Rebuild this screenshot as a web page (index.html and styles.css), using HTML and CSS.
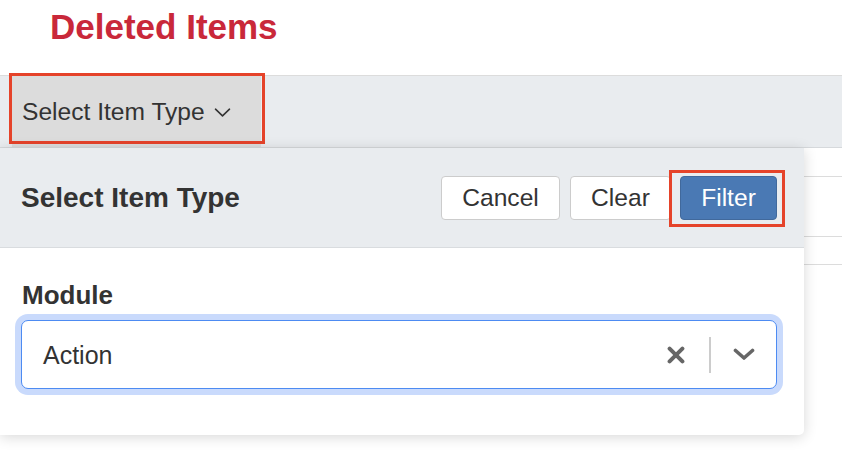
FILE: index.html
```html
<!DOCTYPE html>
<html lang="en">
<head>
<meta charset="utf-8">
<title>Deleted Items</title>
<link rel="stylesheet" href="styles.css">
</head>
<body>
  <div class="page">
    <header class="page-header">
      <h1 class="page-title">Deleted Items</h1>
    </header>

    <div class="filter-wrap">
      <div class="toolbar">
        <button class="type-toggle annotated-bar" type="button">
          <span>Select Item Type</span>
          <svg class="toggle-chevron" width="17" height="9" viewBox="0 0 17 9" aria-hidden="true">
            <polyline points="1.5,1.2 8.5,7.8 15.5,1.2" fill="none" stroke="#333" stroke-width="1.6" stroke-linecap="round" stroke-linejoin="round"/>
          </svg>
        </button>
      </div>

      <div class="popover">
        <div class="popover-header">
          <h2 class="popover-title">Select Item Type</h2>
          <div class="actions">
            <button class="btn btn-default" type="button">Cancel</button>
            <button class="btn btn-default btn-clear" type="button">Clear</button>
            <button class="btn btn-primary annotated-btn" type="button">Filter</button>
          </div>
        </div>
        <div class="popover-body">
          <label class="field-label">Module</label>
          <div class="select-box">
            <span class="select-value">Action</span>
            <svg class="clear-icon" width="18" height="18" viewBox="0 0 18 18" aria-hidden="true">
              <path d="M2.6 2.6 L15.4 15.4 M15.4 2.6 L2.6 15.4" fill="none" stroke="#666" stroke-width="4" stroke-linecap="round"/>
            </svg>
            <span class="select-sep"></span>
            <svg class="select-chevron" width="22" height="13" viewBox="0 0 22 13" aria-hidden="true">
              <polyline points="2.5,2.5 11,10 19.5,2.5" fill="none" stroke="#666" stroke-width="3.6" stroke-linecap="round" stroke-linejoin="round"/>
            </svg>
          </div>
        </div>
      </div>
    </div>

    <table class="list">
      <tr class="row-head"><td></td></tr>
      <tr class="row-main"><td></td></tr>
      <tr class="row-sub"><td></td></tr>
    </table>
  </div>
</body>
</html>
```

FILE: styles.css
```css
* {
  box-sizing: border-box;
}

html,
body {
  height: 100%;
}

body {
  margin: 0;
  background: #ffffff;
  color: #333333;
  font-family: "Liberation Sans", Arial, Helvetica, sans-serif;
}

.page {
  min-height: 468px;
  overflow: hidden;
}

.page-header {
  height: 75px;
  padding: 7px 0 0 50px;
}

.page-title {
  margin: 0;
  font-size: 35px;
  line-height: 40px;
  font-weight: 700;
  color: #c9283a;
}

.filter-wrap {
  position: relative;
}

.toolbar {
  height: 73px;
  background: #e9ecef;
  border-top: 1px solid #dcdcdc;
  border-bottom: 1px solid #d6d9dc;
  padding-left: 12px;
  display: flex;
}

.type-toggle {
  position: relative;
  display: flex;
  align-items: center;
  gap: 9px;
  width: 249px;
  height: 100%;
  margin: 0;
  padding: 0 0 0 10px;
  border: 0;
  background: #dcdcdc;
  color: #333333;
  font-family: inherit;
  font-size: 24.6px;
}

.toggle-chevron {
  margin-top: 1px;
}

.annotated-bar::after {
  content: "";
  position: absolute;
  left: -3px;
  top: -3px;
  right: -4px;
  bottom: 3px;
  border: 3px solid #e5432a;
}

.popover {
  position: absolute;
  top: 100%;
  left: 0;
  width: 804px;
  height: 287px;
  background: #ffffff;
  border-radius: 0 0 5px 0;
  box-shadow: 0 2px 14px rgba(0, 0, 0, 0.16);
  z-index: 2;
}

.popover-header {
  height: 100px;
  background: #e9ecef;
  border-bottom: 1px solid #d9dcdf;
  display: flex;
  align-items: center;
  justify-content: space-between;
  padding: 0 27px 0 21px;
}

.popover-title {
  margin: 0;
  font-size: 28px;
  font-weight: 700;
  color: #333333;
}

.actions {
  display: flex;
  align-items: center;
  gap: 10px;
}

.btn {
  height: 44px;
  padding: 0;
  border-radius: 4px;
  font-family: inherit;
  font-size: 24.6px;
  line-height: 42px;
  text-align: center;
}

.btn-default {
  background: #ffffff;
  border: 1px solid #cccccc;
  color: #333333;
  width: 119px;
}

.btn-clear {
  width: 101px;
  margin-right: -1px;
}

.btn-primary {
  position: relative;
  width: 97px;
  background: #4a79b4;
  border: 1px solid #41699c;
  color: #ffffff;
}

.annotated-btn::after {
  content: "";
  position: absolute;
  left: -12px;
  top: -7px;
  right: -9px;
  bottom: -8px;
  border: 3px solid #e5432a;
}

.popover-body {
  padding: 32px 27px 0 21px;
}

.field-label {
  display: block;
  margin: 0 0 10px 1px;
  font-size: 26px;
  line-height: 30px;
  font-weight: 700;
  color: #333333;
}

.select-box {
  display: flex;
  align-items: center;
  height: 69px;
  padding: 0 21px 0 21px;
  border: 1px solid #4d8bf2;
  border-radius: 7px;
  box-shadow: 0 0 0 6px #c9dafc;
  background: #ffffff;
}

.select-value {
  flex: 1;
  font-size: 25px;
  color: #333333;
  padding-top: 1px;
}

.select-sep {
  width: 2px;
  height: 36px;
  margin: 0 22px 0 24px;
  background: #cccccc;
}

.list {
  width: 100%;
  border-collapse: collapse;
}

.list td {
  padding: 0;
  border-bottom: 1px solid #dcdcdc;
}

.row-head td {
  height: 28px;
}

.row-main td {
  height: 60px;
}

.row-sub td {
  height: 28px;
}
```
